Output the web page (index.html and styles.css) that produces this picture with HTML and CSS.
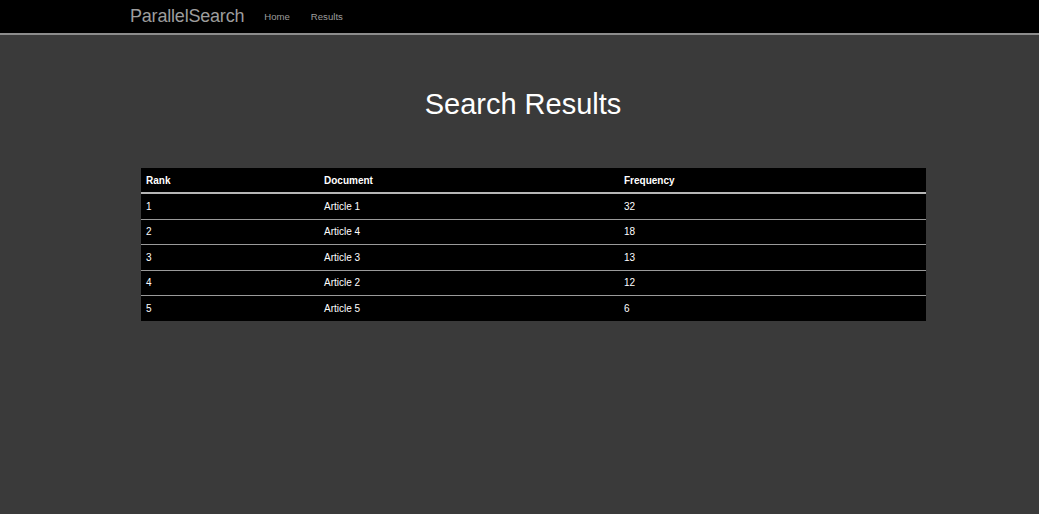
FILE: index.html
```html
<!DOCTYPE html>
<html>
<head>
<meta charset="utf-8">
<link rel="stylesheet" href="styles.css">
</head>
<body>
<nav class="navbar">
  <div class="nav-inner">
    <a class="brand" href="#">ParallelSearch</a>
    <a class="nav-link" href="#">Home</a>
    <a class="nav-link" href="#">Results</a>
  </div>
</nav>
<main class="content">
  <h1 class="title">Search Results</h1>
  <table class="results">
    <thead>
      <tr><th class="c1">Rank</th><th class="c2">Document</th><th>Frequency</th></tr>
    </thead>
    <tbody>
      <tr><td>1</td><td>Article 1</td><td>32</td></tr>
      <tr><td>2</td><td>Article 4</td><td>18</td></tr>
      <tr><td>3</td><td>Article 3</td><td>13</td></tr>
      <tr><td>4</td><td>Article 2</td><td>12</td></tr>
      <tr><td>5</td><td>Article 5</td><td>6</td></tr>
    </tbody>
  </table>
</main>
</body>
</html>
```
FILE: styles.css
```css
html, body {
  margin: 0;
  padding: 0;
  background: #3a3a3a;
  font-family: "Liberation Sans", Arial, sans-serif;
  height: 100%;
}
.navbar {
  background: #000;
  height: 33px;
  border-bottom: 2px solid #8c8c8c;
}
.nav-inner {
  display: flex;
  align-items: center;
  height: 33px;
  padding-left: 130px;
}
.brand {
  color: #9d9d9d;
  font-size: 18px;
  text-decoration: none;
  margin-right: 20px;
  letter-spacing: -0.2px;
}
.nav-link {
  color: #9d9d9d;
  font-size: 9.6px;
  text-decoration: none;
  margin-right: 21px;
}
.content {
  padding: 0 113px 0 141px;
}
.title {
  margin: 52px 0 0;
  text-align: center;
  color: #fff;
  font-weight: normal;
  font-size: 29px;
  line-height: 34px;
  padding-right: 21px;
}
.results {
  margin-top: 47px;
  width: 785px;
  border-collapse: collapse;
  background: #000;
  color: #fff;
  font-size: 10px;
}
.results th, .results td {
  text-align: left;
  padding: 0 5px;
  height: 24.5px;
}
.results th {
  height: 24px;
  font-weight: bold;
  border-bottom: 2px solid #b5b5b5;
}
.results tbody tr + tr td {
  border-top: 1px solid #9a9a9a;
}
.results .c1 { width: 168px; }
.results .c2 { width: 290px; }
```
